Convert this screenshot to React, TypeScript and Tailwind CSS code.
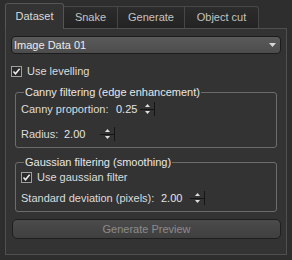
import React from 'react';

function Spin({ value, width }: { value: string; width: string }) {
  return (
    <div className="flex items-center h-[14px]">
      <span className={`${width} text-[#e4e4e4]`}>{value}</span>
      <div className="w-[15px] h-[14px] flex flex-col border-r border-[#151515]">
        <div className="flex-1 flex items-center justify-center border-b border-[#151515]">
          <svg width="5" height="3" viewBox="0 0 5 3"><path d="M0 3 L2.5 0 L5 3 Z" fill="#e0e0e0" /></svg>
        </div>
        <div className="flex-1 flex items-center justify-center">
          <svg width="5" height="3" viewBox="0 0 5 3"><path d="M0 0 L2.5 3 L5 0 Z" fill="#e0e0e0" /></svg>
        </div>
      </div>
    </div>
  );
}

function Check() {
  return (
    <div className="w-[11px] h-[11px] border border-[#a0a0a0] bg-[#2a2a2a] flex items-center justify-center">
      <svg width="9" height="9" viewBox="0 0 9 9">
        <path d="M1.5 4.5 L3.5 6.8 L7.6 1.8" stroke="#f0f0f0" strokeWidth="1.5" fill="none" />
      </svg>
    </div>
  );
}

const tabs = ['Snake', 'Generate', 'Object cut'];

export default function App() {
  return (
    <div className="w-[292px] h-[260px] bg-[#2e2e2e] pt-[3px] px-[5px] font-['Liberation_Sans',sans-serif] text-[11px] leading-[13px] text-[#dcdcdc]">
      {/* Tabs */}
      <div className="flex items-end h-[25px]">
        <div className="relative z-10 -mb-px h-[26px] w-[59px] flex items-center justify-center bg-[#333333] border border-b-0 border-[#555555] rounded-t-[3px] text-[#dadada]">
          Dataset
        </div>
        {tabs.map((t, i) => (
          <div
            key={t}
            className={`h-[22px] flex items-center justify-center bg-gradient-to-b from-[#2c2c2c] to-[#232323] border border-b-0 border-l-0 border-[#474747] text-[#c4c4c4] ${
              i === 0 ? 'w-[54px]' : i === 1 ? 'w-[67px]' : 'w-[74px] rounded-tr-[3px]'
            }`}
          >
            {t}
          </div>
        ))}
      </div>

      {/* Pane */}
      <div className="h-[227px] border border-[#505050] bg-[#333333] px-[5px] pt-[7px]">
        <div className="h-[18px] rounded-[4px] border border-[#1c1c1c] bg-gradient-to-b from-[#5a5a5a] to-[#4c4c4c] flex items-center justify-between pl-[2px] pr-[4px] text-[#ececec]">
          <span>Image Data 01</span>
          <svg width="7" height="4" viewBox="0 0 7 4"><path d="M0 0 L3.5 4 L7 0 Z" fill="#d8d8d8" /></svg>
        </div>

        <div className="mt-[12px] flex items-center gap-[5px] h-[11px]">
          <Check />
          <span>Use levelling</span>
        </div>

        <fieldset className="mt-[9px] mx-[4px] border border-[#6c6c6c] rounded-[3px] pl-[5px] pt-[3px] pb-[6px]">
          <legend className="ml-[3px] px-[1px] text-[#e8e8e8]">Canny filtering (edge enhancement)</legend>
          <div className="flex items-center h-[14px]">
            <span className="w-[95px]">Canny proportion:</span>
            <Spin value="0.25" width="w-[24px]" />
          </div>
          <div className="flex items-center h-[14px] mt-[11px]">
            <span className="w-[43px]">Radius:</span>
            <Spin value="2.00" width="w-[36px]" />
          </div>
        </fieldset>

        <fieldset className="mt-[8px] mx-[4px] border border-[#6c6c6c] rounded-[3px] pl-[5px] pt-[3px] pb-[6px]">
          <legend className="ml-[3px] px-[1px] text-[#e8e8e8]">Gaussian filtering (smoothing)</legend>
          <div className="flex items-center gap-[5px] h-[11px]">
            <Check />
            <span>Use gaussian filter</span>
          </div>
          <div className="flex items-center h-[14px] mt-[8px]">
            <span className="w-[140px]">Standard deviation (pixels):</span>
            <Spin value="2.00" width="w-[29px]" />
          </div>
        </fieldset>

        <button className="mt-[7px] ml-[1px] w-[269px] h-[20px] rounded-[5px] border border-[#1f1f1f] bg-gradient-to-b from-[#4b4b4b] to-[#3f3f3f] text-[#8c8c8c] flex items-center justify-center">
          Generate Preview
        </button>
      </div>
    </div>
  );
}
